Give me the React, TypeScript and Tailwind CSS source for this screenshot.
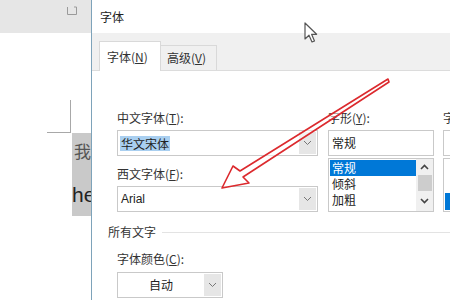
import { ReactNode } from "react";

const cjk = "font-['Noto_Sans_CJK_SC','Noto_Sans',sans-serif]";

const Chevron = ({ up = false }: { up?: boolean }) => (
  <svg width="9" height="6" viewBox="0 0 9 6">
    <polyline
      points={up ? "1,5 4.5,1.5 8,5" : "1,1 4.5,4.5 8,1"}
      fill="none"
      stroke={up ? "#444" : "#777"}
      strokeWidth={up ? 1.6 : 1}
    />
  </svg>
);

const Label = ({ text, k }: { text: string; k: string }) => (
  <div className={`h-[16px] leading-[16px] text-[12px] text-[#333] ${cjk}`}>
    {text}(<span className="underline">{k}</span>):
  </div>
);

const Combo = ({ children, w }: { children: ReactNode; w: string }) => (
  <div className={`${w} h-[26px] border border-[#c9c9c9] bg-white flex`}>
    <div className="flex-1 flex items-center overflow-hidden">{children}</div>
    <div className="w-[17px] my-[1px] mr-[1px] bg-[#e6e6e6] flex items-center justify-center">
      <Chevron />
    </div>
  </div>
);

export default function App() {
  return (
    <div className="relative w-[450px] h-[300px] overflow-hidden bg-white flex">
      {/* word document behind */}
      <div className="w-[91px] shrink-0 overflow-hidden flex flex-col">
        <div className="h-[33px] bg-[#e6e6e6] flex items-start justify-end pr-[13px] pt-[6px]">
          <svg width="12" height="10" viewBox="0 0 12 10">
            <path d="M1.5 1 V8.5 H10.5 V1" fill="none" stroke="#9a9a9a" strokeWidth="1" />
            <path d="M8 1 H10.5" fill="none" stroke="#9a9a9a" strokeWidth="1" />
          </svg>
        </div>
        <div className="ml-[47px] mt-[67px] w-[24px] h-[33px] border-r border-b border-[#a8a8a8]" />
        <div className="ml-[72px] w-[30px] h-[83px] bg-[#c9c9c9] flex flex-col">
          <div className={`mt-[7px] ml-[2px] text-[17px] leading-[22px] text-[#555] ${cjk}`}>我</div>
          <div className="mt-[21px] text-[21px] leading-[24px] text-[#222] font-['Liberation_Sans',sans-serif]">
            he
          </div>
        </div>
      </div>
      <div className="w-[1px] shrink-0 bg-[#7ea3ba]" />

      {/* font dialog */}
      <div className="flex-1 flex flex-col">
        <div className={`h-[33px] pl-[8px] flex items-center text-[12px] text-[#222] ${cjk}`}>字体</div>
        <div className="h-[38px] bg-[#f0f0f0] border-b border-[#dcdcdc] pl-[7px] flex items-end">
          <div
            className={`w-[62px] h-[30px] -mb-[1px] bg-white border border-b-0 border-[#d9d9d9] pl-[7px] flex items-center text-[12px] text-[#333] ${cjk}`}
          >
            字体(<span className="underline">N</span>)
          </div>
          <div
            className={`w-[56px] h-[25px] bg-[#f0f0f0] border border-l-0 border-b-0 border-[#d9d9d9] pl-[6px] flex items-center text-[12px] text-[#333] ${cjk}`}
          >
            高级(<span className="underline">V</span>)
          </div>
        </div>

        <div className="flex-1 pl-[16px] pt-[39px] flex flex-col">
          <div className="ml-[9px] flex gap-[10px]">
            <div className="w-[201px] flex flex-col">
              <Label text="中文字体" k="T" />
              <div className="mt-[4px]">
                <Combo w="w-[201px]">
                  <span className={`ml-[2px] px-[1px] bg-[#a9cff0] text-[12px] leading-[15px] text-[#222] ${cjk}`}>
                    华文宋体
                  </span>
                </Combo>
              </div>
              <div className="mt-[10px]">
                <Label text="西文字体" k="F" />
              </div>
              <div className="mt-[4px]">
                <Combo w="w-[201px]">
                  <span className="ml-[3px] text-[12px] text-[#222] font-['Liberation_Sans',sans-serif]">Arial</span>
                </Combo>
              </div>
            </div>

            <div className="w-[106px] flex flex-col">
              <Label text="字形" k="Y" />
              <div
                className={`mt-[4px] h-[26px] border border-[#c9c9c9] pl-[3px] flex items-center text-[12px] text-[#222] ${cjk}`}
              >
                常规
              </div>
              <div className="mt-[2px] h-[54px] border border-[#c9c9c9] flex">
                <div className={`flex-1 pt-[1px] pl-[1px] text-[12px] leading-[16px] text-[#222] ${cjk}`}>
                  <div className="bg-[#0078d7] text-white pl-[2px]">常规</div>
                  <div className="pl-[2px]">倾斜</div>
                  <div className="pl-[2px]">加粗</div>
                </div>
                <div className="w-[17px] bg-[#f0f0f0] flex flex-col items-center">
                  <div className="h-[16px] flex items-center">
                    <Chevron up />
                  </div>
                  <div className="w-[14px] h-[16px] bg-[#cdcdcd]" />
                  <div className="flex-1 flex items-center">
                    <svg width="9" height="6" viewBox="0 0 9 6">
                      <polyline points="1,1 4.5,4.5 8,1" fill="none" stroke="#444" strokeWidth="1.6" />
                    </svg>
                  </div>
                </div>
              </div>
            </div>

            <div className="w-[40px] -ml-[1px] flex flex-col">
              <div className={`h-[16px] leading-[16px] text-[12px] text-[#333] ${cjk}`}>字</div>
              <div className="mt-[4px] h-[26px] border border-[#c9c9c9]" />
              <div className="mt-[2px] h-[54px] border border-[#c9c9c9] flex flex-col">
                <div className="flex-1" />
                <div className="h-[17px] ml-[1px] mb-[1px] bg-[#0078d7]" />
              </div>
            </div>
          </div>

          <div className="mt-[12px] h-[16px] flex items-center gap-[6px]">
            <span className={`text-[12px] leading-[16px] text-[#333] ${cjk}`}>所有文字</span>
            <div className="flex-1 h-[1px] bg-[#e3e3e3]" />
          </div>

          <div className="ml-[9px] mt-[11px] flex flex-col">
            <Label text="字体颜色" k="C" />
            <div className="mt-[5px]">
              <Combo w="w-[106px]">
                <span className={`w-full text-center text-[12px] text-[#222] ${cjk}`}>自动</span>
              </Combo>
            </div>
          </div>
        </div>
      </div>

      {/* mouse pointer */}
      <svg className="absolute left-[304px] top-[22px]" width="14" height="22" viewBox="0 0 14 22">
        <path
          d="M1 1 L1 17 L5 13.2 L8 20 L10.5 19 L7.6 12.3 L12.6 12.3 Z"
          fill="white"
          stroke="#555"
          strokeWidth="1.2"
          strokeLinejoin="round"
        />
      </svg>

      {/* red annotation arrow */}
      <svg className="absolute left-0 top-0 pointer-events-none" width="450" height="300" viewBox="0 0 450 300">
        <path
          d="M388 79 L240 171 L233 166 L222 188 L249 183 L243 177 L389 82 Z"
          fill="rgba(255,255,255,0.5)"
          stroke="#dc2a2e"
          strokeWidth="1.6"
          strokeLinejoin="round"
        />
      </svg>
    </div>
  );
}
